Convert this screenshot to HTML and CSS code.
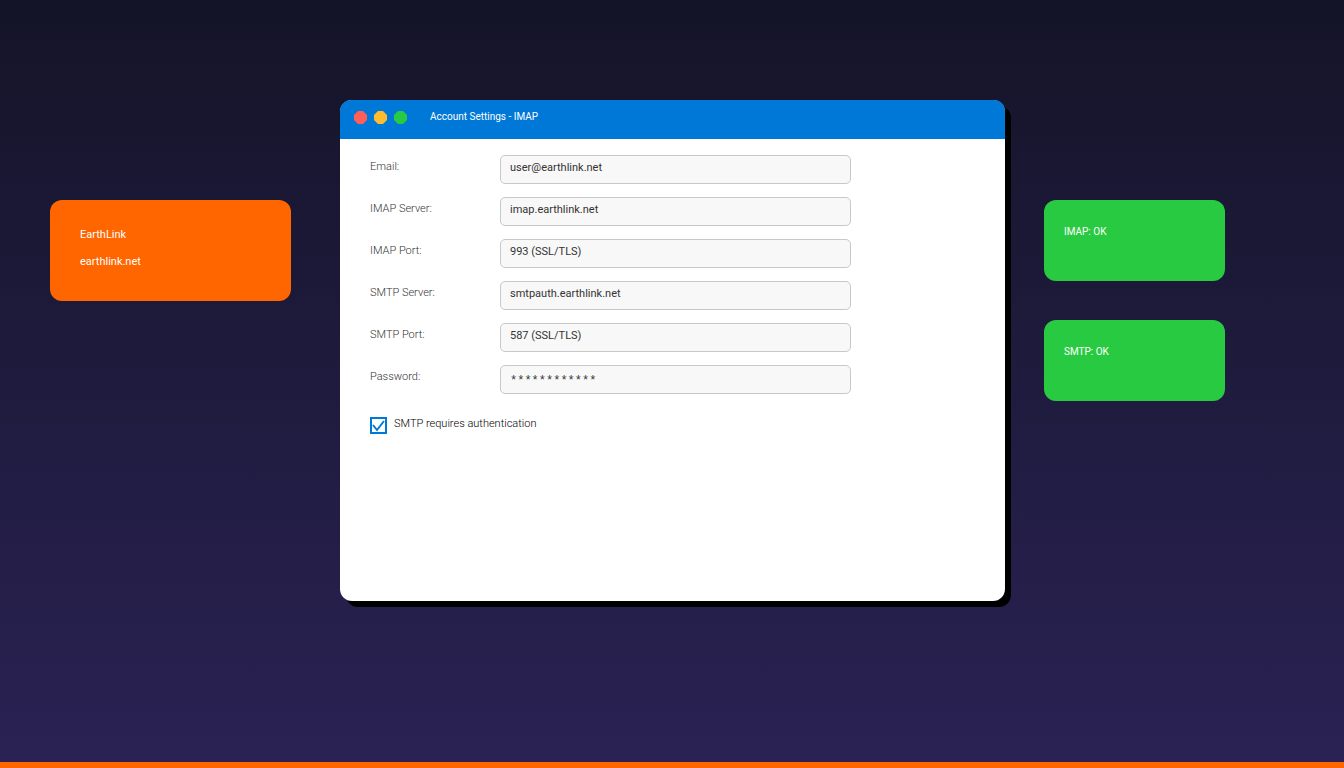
FILE: index.html
```html
<!DOCTYPE html>
<html lang="en">
<head>
<meta charset="utf-8">
<title>Account Settings - IMAP</title>
<link rel="stylesheet" href="styles.css">
</head>
<body>
<main class="desktop">
  <aside class="brand">
    <p>EarthLink</p>
    <p>earthlink.net</p>
  </aside>
  <section class="window">
    <header class="titlebar">
      <svg class="lights" viewBox="0 0 53 13" aria-hidden="true">
        <path class="close" d="M4 0h5l4 4v5l-4 4H4L0 9V4z"/>
        <path class="minimize" d="M24 0h5l4 4v5l-4 4h-5l-4-4V4z"/>
        <path class="maximize" d="M44 0h5l4 4v5l-4 4h-5l-4-4V4z"/>
      </svg>
      <h1>Account Settings - IMAP</h1>
    </header>
    <form class="settings">
      <div class="row"><label for="email">Email:</label><input id="email" type="text" value="user@earthlink.net"></div>
      <div class="row"><label for="imap-server">IMAP Server:</label><input id="imap-server" type="text" value="imap.earthlink.net"></div>
      <div class="row"><label for="imap-port">IMAP Port:</label><input id="imap-port" type="text" value="993 (SSL/TLS)"></div>
      <div class="row"><label for="smtp-server">SMTP Server:</label><input id="smtp-server" type="text" value="smtpauth.earthlink.net"></div>
      <div class="row"><label for="smtp-port">SMTP Port:</label><input id="smtp-port" type="text" value="587 (SSL/TLS)"></div>
      <div class="row"><label for="password">Password:</label><input id="password" class="secret" type="text" value="************"></div>
      <div class="auth">
        <span class="tick">
          <input id="auth" type="checkbox" checked>
          <svg viewBox="0 0 17 17" aria-hidden="true"><path d="M3 8l4 5 7-9"/></svg>
        </span>
        <label for="auth">SMTP requires authentication</label>
      </div>
    </form>
  </section>
  <aside class="statuses">
    <p class="status">IMAP: OK</p>
    <p class="status">SMTP: OK</p>
  </aside>
</main>
<footer class="strip"></footer>
</body>
</html>
```

FILE: styles.css
```css
* { box-sizing: border-box; }

body {
  margin: 0;
  min-height: 100vh;
  display: flex;
  flex-direction: column;
  background: linear-gradient(#141428, #2a2254);
  font: 11px/13px Roboto, "Liberation Sans", sans-serif;
  color: #333;
}

p, h1 { margin: 0; }

.desktop {
  flex: 1;
  display: grid;
  grid-template-columns: 251fr 665fr 181fr;
  column-gap: 39px;
  align-items: start;
  padding: 100px 119px 40px 50px;
}

.brand {
  display: grid;
  gap: 14px;
  margin: 100px 10px 0 0;
  padding: 28px 30px 33px;
  border-radius: 12px;
  background: #ff6600;
  color: #fff;
}

.window {
  min-height: 501px;
  border-radius: 12px;
  background: #fff;
  box-shadow: 6px 6px 0 #000;
}

.titlebar {
  display: flex;
  align-items: flex-start;
  gap: 23px;
  height: 39px;
  padding: 11px 14px;
  border-radius: 11px 11px 0 0;
  background: #0078d7;
  color: #fff;
}

.titlebar h1 { font-size: 10px; font-weight: 400; line-height: 12px; }

.lights { width: 53px; height: 13px; }
.close { fill: #ff5f57; }
.minimize { fill: #ffbd2e; }
.maximize { fill: #28ca42; }

.settings {
  display: grid;
  gap: 13px;
  padding: 16px 30px;
}

.row {
  display: grid;
  grid-template-columns: 130px minmax(0, 351px);
}

.row label { padding-top: 5px; font-weight: 300; color: #333; }

.row input {
  height: 29px;
  padding: 0 9px 4px;
  border: 1px solid #c8c8c8;
  border-radius: 5px;
  background: #f8f8f8;
  color: #333;
  font: inherit;
}

.row .secret {
  padding: 3px 9px 1px;
  font: 12px/14px "Liberation Mono", monospace;
}

.auth {
  display: flex;
  gap: 7px;
  padding-top: 10px;
}

.auth label { font-weight: 300; color: #000; }

.tick { display: grid; }
.tick > * { grid-area: 1 / 1; }

.tick input {
  appearance: none;
  width: 17px;
  height: 17px;
  margin: 0;
  border: 2px solid #0078d7;
  background: #fff;
}

.tick svg {
  width: 17px;
  height: 17px;
  fill: none;
  stroke: #0078d7;
  stroke-width: 2;
  pointer-events: none;
}

.tick input:not(:checked) + svg { visibility: hidden; }

.statuses {
  display: grid;
  gap: 39px;
  margin-top: 100px;
}

.status {
  min-height: 81px;
  padding: 25px 20px;
  border-radius: 12px;
  background: #28ca42;
  color: #fff;
  font-size: 10px;
}

.strip { height: 6px; background: #ff6600; }
```
